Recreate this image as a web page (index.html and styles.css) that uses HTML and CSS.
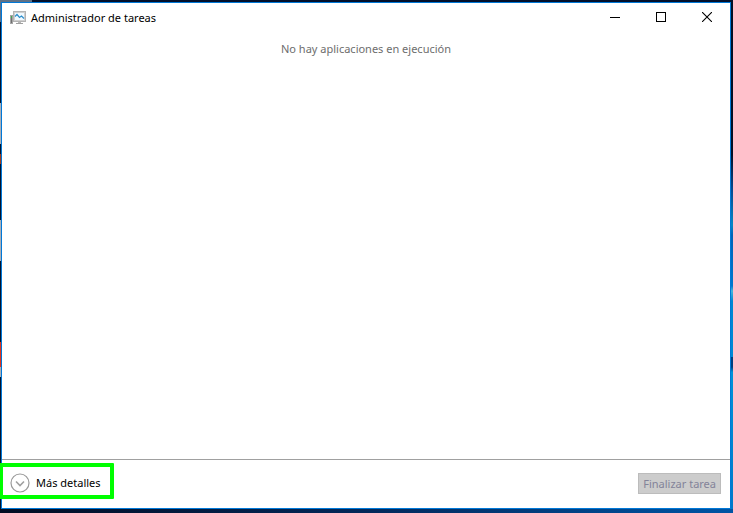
FILE: index.html
```html
<!DOCTYPE html>
<html lang="es">
<head>
<meta charset="UTF-8">
<meta name="viewport" content="width=device-width, initial-scale=1">
<title>Administrador de tareas</title>
<link rel="stylesheet" href="styles.css">
</head>
<body>

	<div class="desktop">
		<div class="edge edge-left"></div>

		<div class="window">
			<header class="titlebar">
				<svg class="app-icon" width="16" height="16" viewBox="0 0 16 16" aria-hidden="true">
					<rect x="0" y="5" width="3" height="9" fill="#a5a5a5"/>
					<rect x="1" y="6" width="1" height="2" fill="#3fae4c"/>
					<rect x="1" y="8" width="1" height="5" fill="#6f6f6f"/>
					<rect x="3.5" y="1.5" width="12" height="10" fill="#d0d0d0" stroke="#b4b4b4"/>
					<rect x="5" y="3" width="9" height="7" fill="#f0f9ff"/>
					<path d="M5 6.5 L7 4.5 L9.5 7.5 L11.5 6 L14 8.5" fill="none" stroke="#2b8dcb" stroke-width="1.2"/>
					<rect x="8" y="12" width="3" height="1" fill="#b8b8b8"/>
					<rect x="6" y="13" width="7" height="1" fill="#a0a0a0"/>
				</svg>
				<h1 class="title">Administrador de tareas</h1>
				<div class="controls">
					<button type="button" class="control" aria-label="Minimizar">
						<svg width="10" height="10" viewBox="0 0 10 10"><path d="M0 5.5 H10" stroke="#000"/></svg>
					</button>
					<button type="button" class="control" aria-label="Maximizar">
						<svg width="10" height="10" viewBox="0 0 10 10"><rect x="0.5" y="0.5" width="9" height="9" fill="none" stroke="#000"/></svg>
					</button>
					<button type="button" class="control" aria-label="Cerrar">
						<svg width="10" height="10" viewBox="0 0 10 10"><path d="M0 0 L10 10 M10 0 L0 10" stroke="#000" stroke-width="1.1"/></svg>
					</button>
				</div>
			</header>

			<main class="content">
				<p class="message">No hay aplicaciones en ejecución</p>
			</main>

			<footer class="footer">
				<button type="button" class="details">
					<svg width="20" height="20" viewBox="0 0 20 20" fill="none" aria-hidden="true">
						<circle cx="10" cy="10" r="9" stroke="#999" stroke-width="1.2"/>
						<path d="M6 8.5 L10 12.5 L14 8.5" stroke="#a0a0a0" stroke-width="1.6"/>
					</svg>
					<span>Más detalles</span>
				</button>
				<button type="button" class="end-task" disabled>Finalizar tarea</button>
				<div class="highlight"></div>
			</footer>
		</div>

		<div class="edge edge-right"></div>
	</div>

</body>
</html>
```

FILE: styles.css
```css
body {
	margin: 0;
	font-family: "Noto Sans", "Open Sans", sans-serif;
	font-size: 11px;
	line-height: 16px;
	color: #000;
}

/* desktop behind the window */
.desktop {
	display: grid;
	grid-template-columns: 1px 1fr 2px;
	box-sizing: border-box;
	min-height: 100vh;
	padding: 2px 0 4px;
	overflow: hidden;
	background:
		linear-gradient(to right, #5f7186 0 32px, #02102b 32px) top / 100% 2px no-repeat,
		linear-gradient(to right, #010c22, #02285a 50%, #0055a5) bottom / 100% 4px no-repeat,
		#02102b;
}

.edge-left {
	background: linear-gradient(
		#56718f 0 4%, #03132e 4% 20%,
		#aab0ba 20% 28%, #03132e 28% 30%,
		#a33b1c 30% 32%, #03132e 32% 43%,
		#aab0ba 43% 51%, #03132e 51% 67%,
		#e2341d 67% 72%, #aab0ba 72% 74%,
		#03132e 74%);
}

.edge-right {
	background: linear-gradient(
		#020f26 0 30%, #044a91 37%, #0787c4 44%,
		#0063b8 46%, #0078cd 56%, #46b5dc 57%,
		#0087d2 59%, #0089d4 70%, #003f80 70% 72%,
		#0092d8 73%, #0079c9 100%);
}

/* window */
.window {
	display: flex;
	flex-direction: column;
	border: 1px solid #0078d7;
	background: #fff;
}

.titlebar {
	display: flex;
	align-items: flex-start;
	height: 30px;
	padding-left: 8px;
}

.app-icon {
	margin-top: 7px;
}

.title {
	flex: 1;
	margin: 7px 0 0 5px;
	font-size: 11px;
	font-weight: normal;
}

.controls {
	display: flex;
}

button {
	font: inherit;
}

.control {
	display: flex;
	align-items: center;
	justify-content: center;
	width: 46px;
	height: 28px;
	padding: 0;
	border: none;
	background: none;
}

.content {
	flex: 1;
	padding-top: 8px;
}

.message {
	margin: 0;
	text-align: center;
	color: #6d6d6d;
}

.footer {
	position: relative;
	display: flex;
	align-items: center;
	justify-content: space-between;
	height: 46px;
	padding: 0 9px 2px 8px;
	border-top: 1px solid #a0a0a0;
}

.details {
	display: flex;
	align-items: center;
	gap: 6px;
	padding: 0;
	border: none;
	background: none;
	color: #000;
}

.end-task {
	height: 21px;
	padding: 0 4px;
	border: 1px solid #bcbcbc;
	background: #ccc;
	color: #838399;
	line-height: 19px;
}

/* green frame around the details button */
.highlight {
	position: absolute;
	top: 3px;
	left: -3px;
	box-sizing: border-box;
	width: 115px;
	height: 36px;
	border: 4px solid #0f0;
	border-radius: 1px;
	pointer-events: none;
}
```
